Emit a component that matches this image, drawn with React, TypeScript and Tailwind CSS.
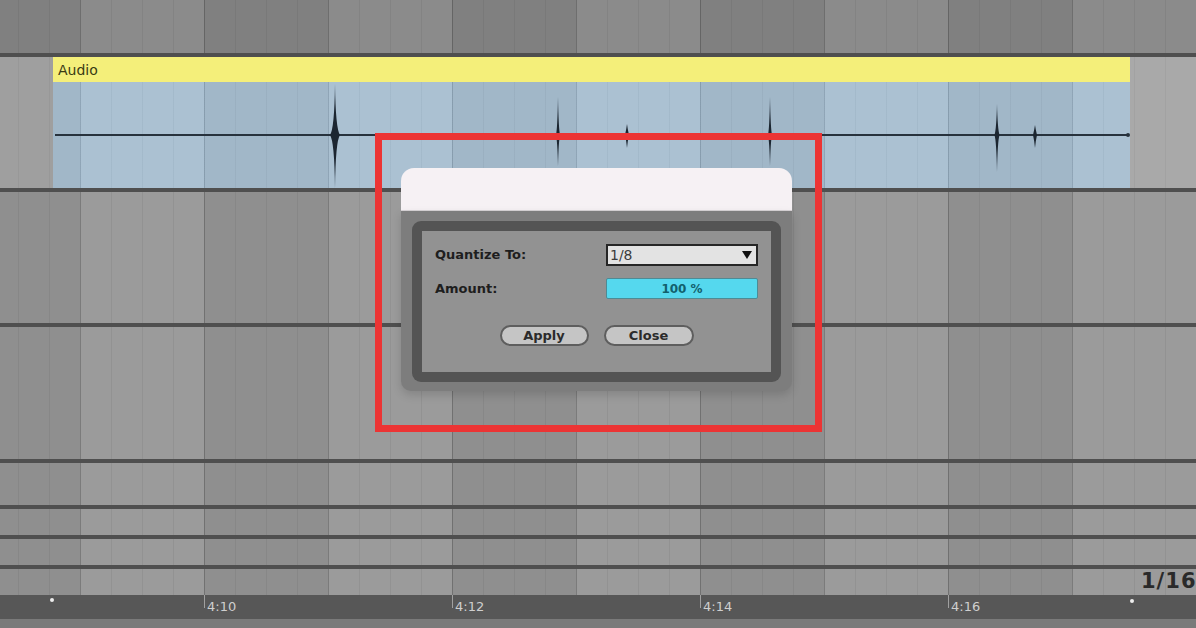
import React from "react";

// bar grid: 124px bars alternating light/dark, beat lines every 31px, first bar line at x=80
const GRID =
  "[background-image:linear-gradient(90deg,rgba(0,0,0,0.16)_0_1px,transparent_1px),linear-gradient(90deg,rgba(0,0,0,0.06)_0_1px,transparent_1px),linear-gradient(90deg,#9b9b9b_0_124px,#8f8f8f_124px_248px)] [background-size:124px_100%,31px_100%,248px_100%] [background-position:80px_0,80px_0,80px_0]";

// same grid for the clip, offset by the clip start (53px)
const CLIP_GRID =
  "[background-image:linear-gradient(90deg,rgba(40,60,80,0.16)_0_1px,transparent_1px),linear-gradient(90deg,rgba(40,60,80,0.06)_0_1px,transparent_1px),linear-gradient(90deg,#abc1d2_0_124px,#a1b7c8_124px_248px)] [background-size:124px_100%,31px_100%,248px_100%] [background-position:27px_0,27px_0,27px_0]";

const FONT = "font-['DejaVu_Sans',sans-serif]";

type Spike = { x: number; top: number; bottom: number; w: number };

const spikes: Spike[] = [
  { x: 282, top: 2, bottom: 106, w: 5 },
  { x: 505, top: 15, bottom: 84, w: 2 },
  { x: 574, top: 42, bottom: 66, w: 2 },
  { x: 717, top: 15, bottom: 84, w: 2 },
  { x: 944, top: 22, bottom: 90, w: 2.5 },
  { x: 982, top: 43, bottom: 66, w: 2 },
];

function Waveform() {
  const c = 53;
  return (
    <svg width="1077" height="106" viewBox="0 0 1077 106" className="block">
      <line x1="2" y1={c} x2="1075" y2={c} stroke="#27323d" strokeWidth="2" />
      {spikes.map((s) => (
        <path
          key={s.x}
          fill="#1c2631"
          d={`M${s.x},${s.top} Q${s.x + 0.6},${c - 6} ${s.x + s.w},${c} Q${s.x + 0.6},${c + 6} ${s.x},${s.bottom} Q${s.x - 0.6},${c + 6} ${s.x - s.w},${c} Q${s.x - 0.6},${c - 6} ${s.x},${s.top} Z`}
        />
      ))}
      <circle cx="1075" cy={c} r="2" fill="#27323d" />
    </svg>
  );
}

function Line() {
  return <div className="h-[4px] bg-[#4f4f4f]" />;
}

function QuantizeDialog() {
  return (
    <div className={`absolute left-[401px] top-[168px] w-[391px] ${FONT}`}>
      <div className="h-[43px] rounded-t-[13px] bg-[#f6f1f4] border-b border-[#d8d3d6]" />
      <div className="rounded-b-[10px] bg-[#7d7d7d] px-[11px] pt-[10px] pb-[9px] shadow-[0_4px_10px_rgba(0,0,0,0.15)]">
        <div className="rounded-[9px] bg-[#545454] p-[10px]">
          <div className="flex h-[141px] flex-col bg-[#929292] px-[13px] pt-[13px]">
            <div className="flex h-[22px] items-center justify-between">
              <span className="text-[13px] font-bold text-[#1e1e1e]">Quantize To:</span>
              <div className="flex h-[22px] w-[152px] items-center justify-between border-2 border-[#262626] bg-[#e3e3e3] pl-[2px] pr-[4px]">
                <span className="text-[14px] leading-none text-[#3c3c3c]">1/8</span>
                <svg width="10" height="8" viewBox="0 0 10 8">
                  <path d="M0 0 H10 L5 8 Z" fill="#111" />
                </svg>
              </div>
            </div>
            <div className="mt-[12px] flex h-[21px] items-center justify-between">
              <span className="text-[13px] font-bold text-[#1e1e1e]">Amount:</span>
              <div className="flex h-[21px] w-[152px] items-center justify-center rounded-[2px] border border-[#4d8b95] bg-[#55d8ee]">
                <span className="text-[12px] font-bold leading-none text-[#12606c]">100 %</span>
              </div>
            </div>
            <div className="mt-[26px] flex justify-center gap-[15px]">
              <button className="h-[21px] w-[89px] rounded-full border-2 border-[#5e5e5e] bg-[#c5c5c5] text-[13px] font-bold leading-none text-[#2b2b2b]">
                Apply
              </button>
              <button className="h-[21px] w-[90px] rounded-full border-2 border-[#5e5e5e] bg-[#c5c5c5] text-[13px] font-bold leading-none text-[#2b2b2b]">
                Close
              </button>
            </div>
          </div>
        </div>
      </div>
    </div>
  );
}

export default function App() {
  const rulerLabels = ["4:10", "4:12", "4:14", "4:16"];

  return (
    <div className={`relative h-[628px] w-[1196px] overflow-hidden ${GRID}`}>
      <div className="flex flex-col">
        {/* top track */}
        <div className="h-[53px] bg-black/10" />
        <Line />

        {/* audio clip track */}
        <div className="flex h-[131px]">
          <div className="w-[53px] bg-white/15" />
          <div className="flex w-[1077px] flex-col">
            <div className={`flex h-[25px] items-center bg-[#f4ef7a] pl-[5px] ${FONT}`}>
              <span className="text-[14px] leading-none text-[#3a3a14]">Audio</span>
            </div>
            <div className={`h-[106px] ${CLIP_GRID}`}>
              <Waveform />
            </div>
          </div>
          <div className="flex-1 bg-white/15" />
        </div>
        <Line />

        <div className="h-[131px]" />
        <Line />
        <div className="h-[132px]" />
        <Line />
        <div className="h-[42px]" />
        <Line />
        <div className="h-[26px]" />
        <Line />
        <div className="h-[26px]" />
        <Line />
        <div className="h-[26px] overflow-hidden whitespace-nowrap pl-[1141px] pt-[1px]">
          <span className={`${FONT} text-[21px] font-bold leading-none tracking-[1px] text-[#2a2a2a]`}>
            1/16
          </span>
        </div>

        {/* ruler */}
        <div className={`relative flex h-[24px] bg-[#575757] pl-[204px] ${FONT}`}>
          {rulerLabels.map((l) => (
            <div key={l} className="flex w-[248px] items-start">
              <div className="h-[13px] w-px bg-[#a0a0a0]" />
              <span className="ml-[2px] mt-[5px] text-[13px] leading-none text-[#cfcfcf]">{l}</span>
            </div>
          ))}
          <div className="absolute left-[50px] top-[3px] h-[4px] w-[4px] rounded-full bg-[#eeeeee]" />
          <div className="absolute left-[1130px] top-[4px] h-[4px] w-[4px] rounded-full bg-[#eeeeee]" />
        </div>
        <div className="h-[9px] bg-[#7a7a7a]" />
      </div>

      <QuantizeDialog />

      {/* highlight box */}
      <div className="absolute left-[375px] top-[133px] h-[299px] w-[447px] border-[7px] border-[#ec3434]" />
    </div>
  );
}
